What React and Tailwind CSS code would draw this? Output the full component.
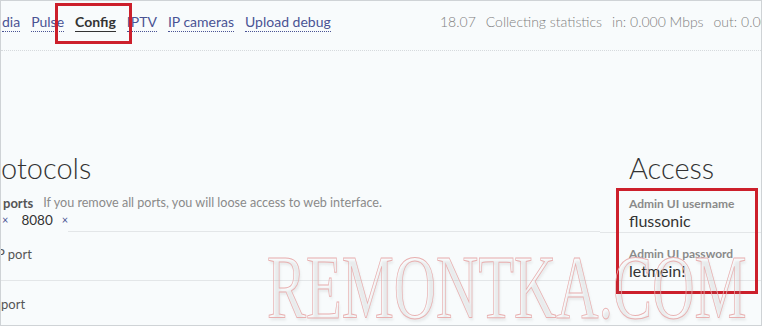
import React from 'react';

const navLinks = ['dia', 'Pulse', 'Config', 'IPTV', 'IP cameras', 'Upload debug'];
const stats = ['18.07', 'Collecting statistics', 'in: 0.000 Mbps', 'out: 0.000 Mbps'];

export default function App() {
  return (
    <div className="w-[763px] h-[328px] bg-white overflow-hidden">
      <div className="relative w-[762px] h-[326px] border border-[#cfd3d6] bg-[#f8fbfc] overflow-hidden font-['Lato','Noto_Sans',sans-serif] text-[#333]">
        {/* Top navigation */}
        <div className="flex items-start h-[50px] border-b border-dotted border-[#d6dadd] pt-[12px]">
          <nav className="flex gap-[11px] pl-[1px] text-[14px] leading-[18px]">
            {navLinks.map((item) => (
              <a
                key={item}
                className={
                  item === 'Config'
                    ? 'font-bold text-[#333] border-b border-[#333]'
                    : 'text-[#4a5394] border-b border-dotted border-[#4a5394]'
                }
              >
                {item}
              </a>
            ))}
          </nav>
          <div className="flex gap-[10px] ml-auto pl-[1px] whitespace-nowrap text-[14px] leading-[18px] font-light text-[#808080] w-[322px] shrink-0">
            {stats.map((s) => (
              <span key={s}>{s}</span>
            ))}
          </div>
        </div>

        {/* Content */}
        <div className="flex">
          {/* Protocols column */}
          <div className="w-[599px] pt-[100px] overflow-hidden">
            <h2 className="text-[29px] leading-[34px] font-light text-[#333]">otocols</h2>
            <div className="mt-[10px]">
              <div className="flex gap-[10px] text-[13px] leading-[16px] pl-[2px]">
                <span className="font-bold text-[#555]">ports</span>
                <span className="text-[12.6px] text-[#8a8a8a]">If you remove all ports, you will loose access to web interface.</span>
              </div>
              <div className="flex items-center h-[20px] text-[13.5px] pb-[2px]">
                <span className="text-[#4a5394] text-[11px] pl-[1px]">×</span>
                <span className="ml-[13px]">8080</span>
                <span className="text-[#4a5394] text-[11px] ml-[9px]">×</span>
              </div>
              <div className="ml-[67px] h-px bg-[#e3e6e8]" />
            </div>
            <div className="h-[49px] border-b border-[#e3e6e8] pt-[14px] text-[13px] leading-[16px] text-[#555]">
              <span className="ml-[-4px]">P port</span>
            </div>
            <div className="pt-[15px] text-[13px] leading-[16px] text-[#555]">
              <span>port</span>
            </div>
          </div>

          {/* Access column */}
          <div className="flex-1 pt-[100px]">
            <h2 className="pl-[29px] text-[29px] leading-[34px] font-light text-[#333]">Access</h2>
            <div className="mt-[12px] pl-[29px] border-b border-[#e3e6e8] h-[36px]">
              <div className="text-[12px] leading-[14px] font-bold text-[#8a8a8a]">Admin UI username</div>
              <div className="text-[16px] leading-[19px] text-[#333]">flussonic</div>
            </div>
            <div className="pl-[29px] pt-[14px] border-b border-[#e3e6e8] h-[48px]">
              <div className="text-[12px] leading-[14px] font-bold text-[#8a8a8a]">Admin UI password</div>
              <div className="text-[16px] leading-[19px] text-[#333]">letmein!</div>
            </div>
          </div>
        </div>

        {/* Highlight boxes */}
        <div className="absolute left-[54px] top-[2px] w-[77px] h-[41px] border-[3px] border-[#cc1f2b]" />
        <div className="absolute left-[615px] top-[187px] w-[142px] h-[106px] border-[3px] border-[#cc1f2b]" />

        {/* Watermark */}
        <div className="absolute left-[266px] top-[237px] origin-left scale-x-[0.65] whitespace-nowrap font-['Liberation_Serif',serif] text-[90px] leading-[100px] text-transparent [-webkit-text-stroke:1px_#e8b0b0] [text-shadow:2px_3px_3px_rgba(120,120,120,0.12)] pointer-events-none">
          REMONTKA.COM
        </div>
      </div>
    </div>
  );
}
